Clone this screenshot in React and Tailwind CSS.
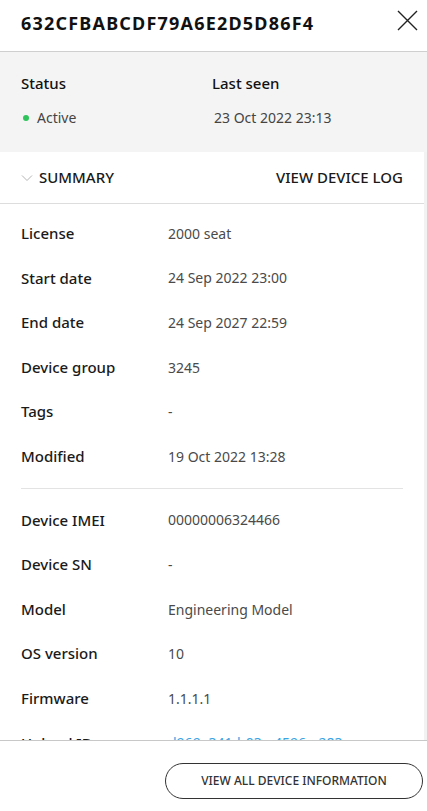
import React from 'react';

const summaryRows = [
  { label: 'License', value: '2000 seat' },
  { label: 'Start date', value: '24 Sep 2022 23:00' },
  { label: 'End date', value: '24 Sep 2027 22:59' },
  { label: 'Device group', value: '3245' },
  { label: 'Tags', value: '-' },
  { label: 'Modified', value: '19 Oct 2022 13:28' },
];

const deviceRows = [
  { label: 'Device IMEI', value: '00000006324466' },
  { label: 'Device SN', value: '-' },
  { label: 'Model', value: 'Engineering Model' },
  { label: 'OS version', value: '10' },
  { label: 'Firmware', value: '1.1.1.1' },
  { label: 'Upload ID', value: 'd969e341-b03e-4596-a283', link: true },
];

const Row = ({ label, value, link }) => (
  <div className="flex items-center h-[44.6px]">
    <div className="w-[147px] shrink-0 text-[15px] font-medium text-[#1a1a1a]">{label}</div>
    <div className={link ? 'text-[14px] text-[#3aa3e3]' : 'text-[14px] text-[#4a4a4a]'}>{value}</div>
  </div>
);

const App = () => {
  return (
    <div className="w-[427px] h-[811px] flex flex-col bg-white overflow-hidden" style={{ fontFamily: '"Noto Sans", "Open Sans", sans-serif' }}>
      {/* header */}
      <div className="h-[52px] shrink-0 flex items-center justify-between pl-[21px] pr-[8px] border-b border-[#cfcfcf]">
        <h1 className="text-[18px] font-bold tracking-[1.2px] text-[#111] -mt-[4px]">632CFBABCDF79A6E2D5D86F4</h1>
        <button className="w-[24px] h-[24px] flex items-center justify-center -mt-[10px]">
          <svg width="21" height="21" viewBox="0 0 21 21" fill="none" stroke="#222" strokeWidth="1.4">
            <path d="M1 1 L20 20 M20 1 L1 20" />
          </svg>
        </button>
      </div>

      {/* status */}
      <div className="h-[100px] shrink-0 bg-[#f4f4f4] grid grid-cols-[191px_1fr] pl-[21px] pt-[20px]">
        <div>
          <div className="text-[15px] font-medium text-[#111] h-[22px]">Status</div>
          <div className="flex items-center mt-[13px] text-[14px] text-[#444]">
            <span className="w-[6px] h-[6px] rounded-full bg-[#2ec45b] mr-[8px] ml-[2px]" />
            Active
          </div>
        </div>
        <div>
          <div className="text-[15px] font-medium text-[#111] h-[22px]">Last seen</div>
          <div className="mt-[13px] text-[14px] text-[#444] ml-[2px]">23 Oct 2022 23:13</div>
        </div>
      </div>

      {/* scroll area */}
      <div className="flex-1 min-h-0 flex overflow-hidden">
        <div className="flex-1 flex flex-col min-w-0">
          <div className="h-[52px] shrink-0 flex items-center justify-between pl-[21px] pr-[21px] border-b border-[#dddddd]">
            <div className="flex items-center">
              <svg width="12" height="8" viewBox="0 0 12 8" fill="none" stroke="#b5b5b5" strokeWidth="1" className="mr-[6px]">
                <path d="M1 1.5 L6 6.5 L11 1.5" />
              </svg>
              <span className="text-[15px] font-medium text-[#1a1a1a]">SUMMARY</span>
            </div>
            <span className="text-[15px] font-medium text-[#1a1a1a]">VIEW DEVICE LOG</span>
          </div>
          <div className="pl-[21px] pr-[21px] pt-[7px]">
            {summaryRows.map((r) => (
              <Row key={r.label} {...r} />
            ))}
            <div className="border-t border-[#e3e3e3] my-[9px]" />
            {deviceRows.map((r) => (
              <Row key={r.label} {...r} />
            ))}
          </div>
        </div>
        <div className="w-[3px] shrink-0 bg-[#f2f2f2]" />
      </div>

      {/* footer */}
      <div className="h-[71px] shrink-0 border-t border-[#c8c8c8] flex items-start justify-end pr-[4px] pt-[22px]">
        <button className="w-[258px] h-[36px] rounded-full border border-[#333] text-[12px] font-medium text-[#333]">
          VIEW ALL DEVICE INFORMATION
        </button>
      </div>
    </div>
  );
};

export default App;
